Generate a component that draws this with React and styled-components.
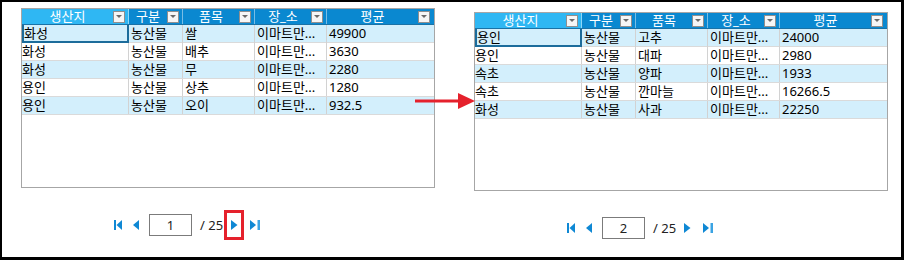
import React from "react";
import styled, { createGlobalStyle } from "styled-components";

const Global = createGlobalStyle`
  html, body { margin: 0; padding: 0; background: #fff; }
  body { font-family: "Noto Sans", "Noto Sans CJK KR", sans-serif; }
  * { box-sizing: border-box; }
`;

const Frame = styled.div`
  position: relative;
  width: 904px;
  height: 260px;
  border-style: solid;
  border-color: #000;
  border-width: 2px 3px 3px 2px;
  background: #fff;
  display: flex;
  align-items: flex-start;
`;

const Panel = styled.div`
  display: flex;
  flex-direction: column;
  margin-left: ${(p) => p.$left}px;
  margin-top: ${(p) => p.$top}px;
`;

const COLS = "107px 54px 72px 72px 1fr";

const Table = styled.div`
  width: 414px;
  height: ${(p) => p.$h}px;
  border: 1px solid #a6a6a6;
  background: #fff;
  display: flex;
  flex-direction: column;
  font-size: 13px;
`;

const HeaderRow = styled.div`
  display: grid;
  grid-template-columns: ${COLS};
  height: 16px;
  border-bottom: 1px solid #1a72a6;
`;

const HeaderCell = styled.div`
  display: flex;
  align-items: center;
  background: ${(p) => (p.$active ? "#2fb7f3" : "#0a88d0")};
  border-right: 1px solid ${(p) => (p.$last ? "transparent" : "rgba(255,255,255,0.45)")};
  color: #fff;
  height: 15px;
`;

const HeaderLabel = styled.span`
  flex: 1;
  text-align: center;
  line-height: 15px;
  white-space: nowrap;
`;

const FilterBtn = styled.span`
  width: 12px;
  height: 12px;
  margin-right: 3px;
  border: 1px solid #8f8f8f;
  background: #f6f6f6;
  display: flex;
  align-items: center;
  justify-content: center;
  flex: none;
  &::after {
    content: "";
    border-left: 3px solid transparent;
    border-right: 3px solid transparent;
    border-top: 3px solid #6a6a6a;
  }
`;

const Row = styled.div`
  display: grid;
  grid-template-columns: ${COLS};
  height: 18px;
  background: ${(p) => (p.$alt ? "#d3effc" : "#fff")};
  border-bottom: 1px solid #dadada;
`;

const Cell = styled.div`
  position: relative;
  padding-left: ${(p) => (p.$first ? 0 : 2)}px;
  line-height: 17px;
  color: #000;
  white-space: nowrap;
  border-right: 1px solid ${(p) => (p.$last ? "transparent" : "#d2d2d2")};
  ${(p) =>
    p.$selected &&
    `
    border: 2px solid #1c6c9b;
    border-top: none;
    line-height: 16px;
  `}
`;

const Pager = styled.div`
  display: flex;
  align-items: center;
  margin-top: 26px;
  margin-left: 93px;
  font-size: 12px;
  color: #222;
`;

const NavIcon = styled.span`
  position: relative;
  display: flex;
  margin-left: ${(p) => p.$gap || 0}px;
  ${(p) =>
    p.$highlight &&
    `
    &::after {
      content: "";
      position: absolute;
      left: -7px;
      right: -6px;
      top: -10px;
      bottom: -10px;
      border: 3px solid #e5212c;
    }
  `}
`;

const PageInput = styled.div`
  width: 43px;
  height: 22px;
  margin-left: 10px;
  border: 1px solid #7b7b7b;
  display: flex;
  align-items: center;
  justify-content: center;
  font-size: 13px;
  color: #222;
`;

const Total = styled.span`
  margin-left: 8px;
  font-size: 13px;
  color: #222;
`;

const Arrow = styled.svg`
  position: absolute;
  left: 413px;
  top: 90px;
`;

const BLUE = "#0f88d4";

const FirstIcon = () => (
  <svg width="8" height="10" viewBox="0 0 8 10">
    <rect x="0" y="0" width="2" height="10" fill={BLUE} />
    <polygon points="8,0 2.5,5 8,10" fill={BLUE} />
  </svg>
);
const PrevIcon = () => (
  <svg width="6" height="10" viewBox="0 0 6 10">
    <polygon points="6,0 0,5 6,10" fill={BLUE} />
  </svg>
);
const NextIcon = () => (
  <svg width="7" height="10" viewBox="0 0 7 10">
    <polygon points="0,0 6.5,5 0,10" fill={BLUE} />
  </svg>
);
const LastIcon = () => (
  <svg width="10" height="10" viewBox="0 0 10 10">
    <polygon points="0,0 6,5 0,10" fill={BLUE} />
    <rect x="7.5" y="0" width="2.5" height="10" fill="#3aa3e3" />
  </svg>
);

const HEADERS = ["생산지", "구분", "품목", "장_소", "평균"];

const GridTable = ({ rows, h }) => (
  <Table $h={h}>
    <HeaderRow>
      {HEADERS.map((t, i) => (
        <HeaderCell key={t} $active={i === 0} $last={i === 4}>
          <HeaderLabel>{t}</HeaderLabel>
          <FilterBtn />
        </HeaderCell>
      ))}
    </HeaderRow>
    {rows.map((r, ri) => (
      <Row key={ri} $alt={ri % 2 === 0}>
        {r.map((c, ci) => (
          <Cell key={ci} $first={ci === 0} $last={ci === 4} $selected={ri === 0 && ci === 0}>
            {c}
          </Cell>
        ))}
      </Row>
    ))}
  </Table>
);

const PagerBar = ({ page, highlight }) => (
  <Pager>
    <NavIcon>
      <FirstIcon />
    </NavIcon>
    <NavIcon $gap={11}>
      <PrevIcon />
    </NavIcon>
    <PageInput>{page}</PageInput>
    <Total>/ 25</Total>
    <NavIcon $gap={8} $highlight={highlight}>
      <NextIcon />
    </NavIcon>
    <NavIcon $gap={12}>
      <LastIcon />
    </NavIcon>
  </Pager>
);

const STORE = "이마트만...";

const LEFT = [
  ["화성", "농산물", "쌀", STORE, "49900"],
  ["화성", "농산물", "배추", STORE, "3630"],
  ["화성", "농산물", "무", STORE, "2280"],
  ["용인", "농산물", "상추", STORE, "1280"],
  ["용인", "농산물", "오이", STORE, "932.5"],
];

const RIGHT = [
  ["용인", "농산물", "고추", STORE, "24000"],
  ["용인", "농산물", "대파", STORE, "2980"],
  ["속초", "농산물", "양파", STORE, "1933"],
  ["속초", "농산물", "깐마늘", STORE, "16266.5"],
  ["화성", "농산물", "사과", STORE, "22250"],
];

export default function App() {
  return (
    <>
      <Global />
      <Frame>
        <Panel $left={19} $top={6}>
          <GridTable rows={LEFT} h={180} />
          <PagerBar page="1" highlight />
        </Panel>
        <Panel $left={39} $top={10}>
          <GridTable rows={RIGHT} h={179} />
          <PagerBar page="2" />
        </Panel>
        <Arrow width="60" height="18" viewBox="0 0 60 18">
          <rect x="0" y="7.5" width="45" height="3" fill="#e5212c" />
          <polygon points="43,1 60,9 43,17" fill="#e5212c" />
        </Arrow>
      </Frame>
    </>
  );
}
